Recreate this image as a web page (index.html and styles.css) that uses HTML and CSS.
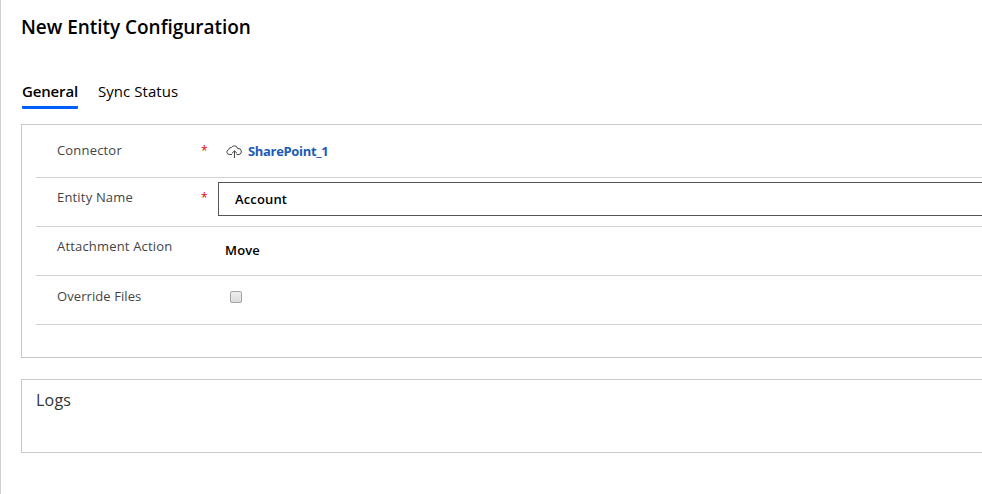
FILE: index.html
```html
<!DOCTYPE html>
<html lang="en">
<head>
<meta charset="utf-8">
<title>New Entity Configuration</title>
<link rel="stylesheet" href="styles.css">
</head>
<body>
<main class="page">
  <h1>New Entity Configuration</h1>
  <nav class="tabs">
    <a class="tab active">General</a>
    <a class="tab sync">Sync Status</a>
  </nav>
  <section class="panel general">
    <div class="row connector">
      <span class="label">Connector</span><span class="req">*</span>
      <svg class="cloud" viewBox="0 0 16 14" width="16" height="14" fill="none" stroke="#333" stroke-width="0.9">
        <path d="M6 9.500H3.200A2.500 2.500 0 0 1 2.700 4.600A2.200 2.200 0 0 1 5.300 2.700A3.400 3.400 0 0 1 11.700 3.600A3 3 0 0 1 13 9.500H10.500"/>
        <path d="M8.500 13V6M6 8.300L8.500 5.900L11 8.300"/>
      </svg>
      <a class="link">SharePoint_1</a>
    </div>
    <div class="row entity">
      <span class="label">Entity Name</span><span class="req">*</span>
      <div class="field">Account</div>
    </div>
    <div class="row action">
      <span class="label">Attachment Action</span><span class="req"></span>
      <span class="value">Move</span>
    </div>
    <div class="row override">
      <span class="label wide">Override Files</span><span class="req"></span>
      <span class="check"></span>
    </div>
  </section>
  <section class="panel logs"><h2>Logs</h2></section>
</main>
</body>
</html>
```
FILE: styles.css
```css
* { box-sizing: border-box; }
body { margin: 0; height: 494px; overflow: hidden; background: #fff; color: #000; font-family: "Open Sans", "Noto Sans", sans-serif; }
.page { height: 494px; border-left: 1px solid #d2d2d2; padding: 14px 0 0 20px; }
h1 { margin: 0; font-size: 19px; line-height: 26px; font-weight: 550; letter-spacing: -0.03px; white-space: nowrap; }
.tabs { display: flex; gap: 20px; margin: 40px 0 0 1px; height: 29px; font-size: 15px; line-height: 22px; }
.tab { white-space: nowrap; }
.active { width: 56px; font-weight: 550; border-bottom: 3px solid #0060ff; border-radius: 1px; letter-spacing: -0.15px; }
.sync { letter-spacing: 0.05px; }
.panel { border: 1px solid #c8c8c8; border-right: 0; }
.general { margin-top: 15px; height: 234px; padding-left: 14px; }
.row { display: flex; align-items: flex-start; border-bottom: 1px solid #d2d2d2; height: 49px; padding-left: 21px; font-size: 13px; }
.label { width: 144px; line-height: 18px; color: #444; letter-spacing: 0.18px; white-space: nowrap; }
.wide { letter-spacing: 0.08px; }
.req { width: 17px; color: #e80000; font-size: 12px; line-height: 20px; }
.connector { height: 53px; padding-top: 16px; }
.cloud { margin: 4px 0 0 8px; }
.link { margin-left: 6px; color: #1c5bb5; font-weight: 700; line-height: 20px; letter-spacing: -0.33px; }
.entity { padding-top: 4px; }
.entity .label, .entity .req { margin-top: 6px; }
.field { flex: 1; height: 34px; border: 1px solid #555; border-right: 0; padding-left: 16px; line-height: 32px; font-weight: 600; letter-spacing: 0.15px; }
.action { padding-top: 10px; }
.value { margin: 4px 0 0 7px; font-weight: 600; line-height: 18px; letter-spacing: 0.15px; }
.override { padding-top: 11px; }
.check { width: 12px; height: 12px; margin: 4px 0 0 12px; border: 1px solid #a5a5a5; border-radius: 2px; background: linear-gradient(#ededed, #dcdcdc); }
.logs { margin-top: 21px; height: 74px; padding: 9px 0 0 14px; }
h2 { margin: 0; font-size: 16px; line-height: 22px; font-weight: 400; letter-spacing: 0.2px; color: #333; }
```
